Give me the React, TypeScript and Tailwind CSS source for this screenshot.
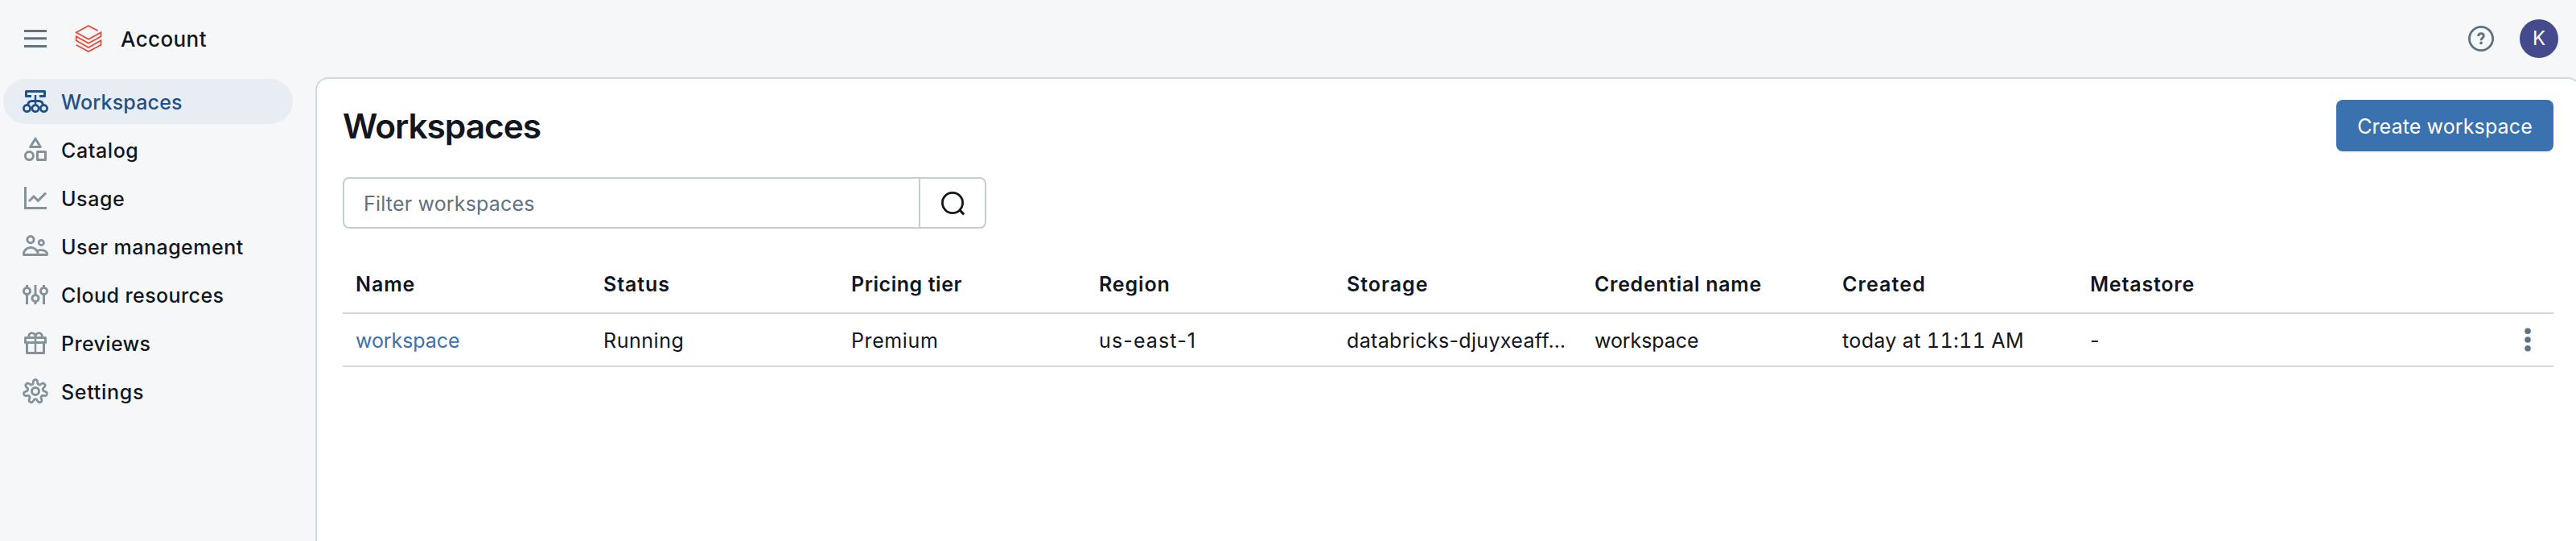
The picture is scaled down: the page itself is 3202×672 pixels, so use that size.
import React from 'react';

type IconProps = { children: React.ReactNode; className?: string };

function Icon({ children, className = '' }: IconProps) {
  return (
    <svg
      viewBox="0 0 32 32"
      className={`size-8 shrink-0 ${className}`}
      fill="none"
      stroke="currentColor"
      strokeWidth="3"
    >
      {children}
    </svg>
  );
}

const gearPath = (() => {
  const points: string[] = [];
  for (let i = 0; i < 210; i++) {
    const a = (i / 210) * Math.PI * 2;
    const r = 12.1 + (2.5 * Math.tanh(1.7 * Math.cos(7 * a))) / Math.tanh(1.7);
    points.push(`${(16 + r * Math.sin(a)).toFixed(2)} ${(16.3 - r * Math.cos(a)).toFixed(2)}`);
  }
  return `M${points.join('L')}Z`;
})();

const WorkspacesIcon = () => (
  <Icon>
    <path d="M11 9.5H4.5V3.5H27.5V9.5H21" strokeLinejoin="round" />
    <path d="M16 8V20" strokeWidth="2.4" />
    <path d="M6.5 20.5C7 17 8.6 15.5 11.5 15.5H20.5C23.4 15.5 25 17 25.5 20.5" strokeWidth="2.8" />
    <circle cx="5.5" cy="24.6" r="4.1" strokeWidth="2.8" />
    <circle cx="16" cy="24.6" r="4.1" strokeWidth="2.8" />
    <circle cx="26.5" cy="24.6" r="4.1" strokeWidth="2.8" />
  </Icon>
);

const CatalogIcon = () => (
  <Icon>
    <path d="M16 2.2L22.3 12.5H9.7Z" strokeLinejoin="round" />
    <circle cx="8.4" cy="23.6" r="5" />
    <rect x="18.5" y="18.5" width="10" height="10" strokeLinejoin="round" />
  </Icon>
);

const UsageIcon = () => (
  <Icon>
    <path d="M3.5 2V28.5H30" />
    <path d="M8 20L14 14L19.3 19.3L29 9.6" />
  </Icon>
);

const UsersIcon = () => (
  <Icon>
    <circle cx="10" cy="7.6" r="4.1" />
    <circle cx="23.3" cy="11.4" r="3.1" strokeWidth="2.8" />
    <path d="M1.5 26.5V23.6C3.3 19.6 6.4 17.5 10.2 17.5C14 17.5 17.2 19.6 19 23.6V26.5Z" strokeLinejoin="round" strokeWidth="2.8" />
    <path d="M17.6 21.8C19.2 21 21 20.7 23 20.7C26.2 20.7 28.8 21.8 30.5 24.2V26.5H18" strokeLinejoin="round" strokeWidth="2.8" />
  </Icon>
);

const SlidersIcon = () => (
  <Icon>
    <path d="M5.5 4V8M5.5 15.5V28M26.5 4V8M26.5 15.5V28M16 4V16.5M16 24V28" />
    <circle cx="5.5" cy="11.5" r="4" />
    <circle cx="16" cy="20.4" r="4" />
    <circle cx="26.5" cy="11.5" r="4" />
  </Icon>
);

const GiftIcon = () => (
  <Icon>
    <path d="M3.5 9.5H28.5V15.5H3.5ZM5.5 15.5V28.5H26.5V15.5" strokeLinejoin="round" />
    <path d="M16 9V28.5" strokeWidth="2.4" />
    <path d="M8 9C7.2 5.6 9 3.7 11.4 3.7C14.2 3.7 16 5.6 16 9C16 5.6 17.8 3.7 20.6 3.7C23 3.7 24.8 5.6 24 9" strokeWidth="2.8" />
  </Icon>
);

const GearIcon = () => (
  <Icon>
    <path d={gearPath} strokeWidth="2.8" strokeLinejoin="round" />
    <circle cx="16" cy="16" r="4.5" />
  </Icon>
);

const navItems = [
  { label: 'Workspaces', icon: WorkspacesIcon, spacing: 'tracking-[0.18px]', active: true },
  { label: 'Catalog', icon: CatalogIcon, spacing: 'tracking-[0.6px]' },
  { label: 'Usage', icon: UsageIcon, spacing: 'tracking-[0.6px]' },
  { label: 'User management', icon: UsersIcon, spacing: 'tracking-[0.5px]' },
  { label: 'Cloud resources', icon: SlidersIcon, spacing: 'tracking-[0.42px]' },
  { label: 'Previews', icon: GiftIcon, spacing: 'tracking-[0.36px]' },
  { label: 'Settings', icon: GearIcon, spacing: 'tracking-[0.7px]' },
];

const columns = [
  { title: 'Name', titleSpacing: 'tracking-[0.9px]', value: 'workspace', valueSpacing: 'tracking-[-0.08px]', link: true },
  { title: 'Status', titleSpacing: 'tracking-[0.9px]', value: 'Running', valueSpacing: 'tracking-[0.54px]' },
  { title: 'Pricing tier', titleSpacing: 'tracking-[0.56px]', value: 'Premium', valueSpacing: 'tracking-[0.6px]' },
  { title: 'Region', titleSpacing: 'tracking-[0.86px]', value: 'us-east-1', valueSpacing: 'tracking-[1.14px]' },
  { title: 'Storage', titleSpacing: 'tracking-[1px]', value: 'databricks-djuyxeaff…', valueSpacing: 'tracking-[0.34px]' },
  { title: 'Credential name', titleSpacing: 'tracking-[0.68px]', value: 'workspace', valueSpacing: 'tracking-[-0.08px]' },
  { title: 'Created', titleSpacing: 'tracking-[1.1px]', value: 'today at 11:11 AM', valueSpacing: 'tabular-nums tracking-[0.36px]' },
  { title: 'Metastore', titleSpacing: 'tracking-[0.81px]', value: '-', valueSpacing: 'tracking-normal' },
];

function Header() {
  return (
    <header className="flex h-24 shrink-0 items-center pr-[22px] pl-7">
      <Icon className="text-[#5f7281]">
        <path d="M2 6.5H30M2 15.8H30M2 25.5H30" />
      </Icon>
      <svg viewBox="0 0 34 36" className="ml-[33px] h-9 w-[34px] shrink-0" fill="none" stroke="#ee4531" strokeWidth="1.75">
        <path d="M28.7 8.3L17 2L1.7 10.3L17 18.7L32.5 10.3V15.3L17 23.7L1.7 15.3V20.3L17 29L32.5 20.3V25.7L17 34L1.7 25.7" />
      </svg>
      <span className="ml-[23px] pt-[2px] text-[26px] font-[450] tracking-[0.4px]">Account</span>
      <div className="ml-auto flex items-center gap-8">
        <Icon className="text-[#5f7281]">
          <circle cx="16" cy="16" r="14.6" strokeWidth="2.8" />
          <path d="M12.6 13C12.6 10.9 14 9.7 16 9.7C18 9.7 19.3 10.9 19.3 12.7C19.3 15.2 16 15.2 16 18.3" strokeWidth="2.8" />
          <circle cx="16" cy="21.4" r="1.8" fill="currentColor" stroke="none" />
        </Icon>
        <div className="flex size-12 items-center justify-center rounded-full bg-[#454a8c] text-[24px] text-white">K</div>
      </div>
    </header>
  );
}

function Sidebar() {
  return (
    <nav className="flex w-[392px] shrink-0 flex-col gap-1 pt-[2px] pr-7 pl-1">
      {navItems.map(({ label, icon: ItemIcon, spacing, active }) => (
        <a
          key={label}
          className={`flex h-14 items-center gap-4 rounded-full pl-6 ${active ? 'bg-[#e8ecf3] text-[#21508a]' : 'text-[#84929c]'}`}
        >
          <ItemIcon />
          <span className={`pt-[2px] text-[25px] font-medium ${spacing} ${active ? '' : 'text-[#11171c]'}`}>{label}</span>
        </a>
      ))}
    </nav>
  );
}

function SearchBar() {
  return (
    <div className="mt-8 flex h-16 w-[800px] rounded-lg border-2 border-[#c2cdd8]">
      <div className="flex flex-1 items-center pt-[2px] pl-6 text-[25px] tracking-[0.18px] text-[#5f7281]">
        Filter workspaces
      </div>
      <button className="flex w-[82px] items-center justify-center border-l-2 border-[#c2cdd8]">
        <Icon>
          <circle cx="16" cy="16" r="12.6" strokeWidth="2.8" />
          <path d="M24.6 24.6L30.2 30.4" />
        </Icon>
      </button>
    </div>
  );
}

function WorkspaceTable() {
  return (
    <div className="mt-8 w-[2748px]">
      <div className="flex h-[74px] items-center border-b-2 border-[#d3d7e1]">
        {columns.map((c) => (
          <div key={c.title} className={`w-[308px] px-4 pt-[2px] text-[25px] font-semibold whitespace-nowrap ${c.titleSpacing}`}>
            {c.title}
          </div>
        ))}
      </div>
      <div className="flex h-[66px] items-center border-b-2 border-[#d3d7e1]">
        {columns.map((c) => (
          <div
            key={c.title}
            className={`w-[308px] pt-[2px] pl-4 text-[25px] whitespace-nowrap ${c.valueSpacing} ${c.link ? 'text-[#3a72b0]' : ''}`}
          >
            {c.value}
          </div>
        ))}
        <svg viewBox="0 0 32 32" className="mr-4 ml-auto size-8 text-[#5f7281]" fill="currentColor">
          <circle cx="16" cy="5.3" r="3.8" />
          <circle cx="16" cy="16" r="3.8" />
          <circle cx="16" cy="26.7" r="3.8" />
        </svg>
      </div>
    </div>
  );
}

export default function App() {
  return (
    <div className="flex h-[672px] w-[3202px] flex-col overflow-hidden bg-[#f6f7f9] font-['Inter','Liberation_Sans',sans-serif] leading-[40px] text-[#11171c]">
      <Header />
      <div className="flex min-h-0 flex-1">
        <Sidebar />
        <main className="w-[2816px] shrink-0 rounded-t-2xl border-2 border-b-0 border-[#d1d9e1] bg-white pt-[26px] pl-8">
          <div className="flex h-16 w-[2748px] items-center justify-between">
            <h1 className="pt-[2px] text-[42.5px] font-semibold tracking-[-1.07px]">Workspaces</h1>
            <button className="flex h-16 w-[270px] items-center justify-center rounded-lg bg-[#3a72b0] pt-[2px] text-[25px] tracking-[0.12px] text-white shadow-[0_2px_0_rgba(0,0,0,0.04)]">
              Create workspace
            </button>
          </div>
          <SearchBar />
          <WorkspaceTable />
        </main>
      </div>
    </div>
  );
}
